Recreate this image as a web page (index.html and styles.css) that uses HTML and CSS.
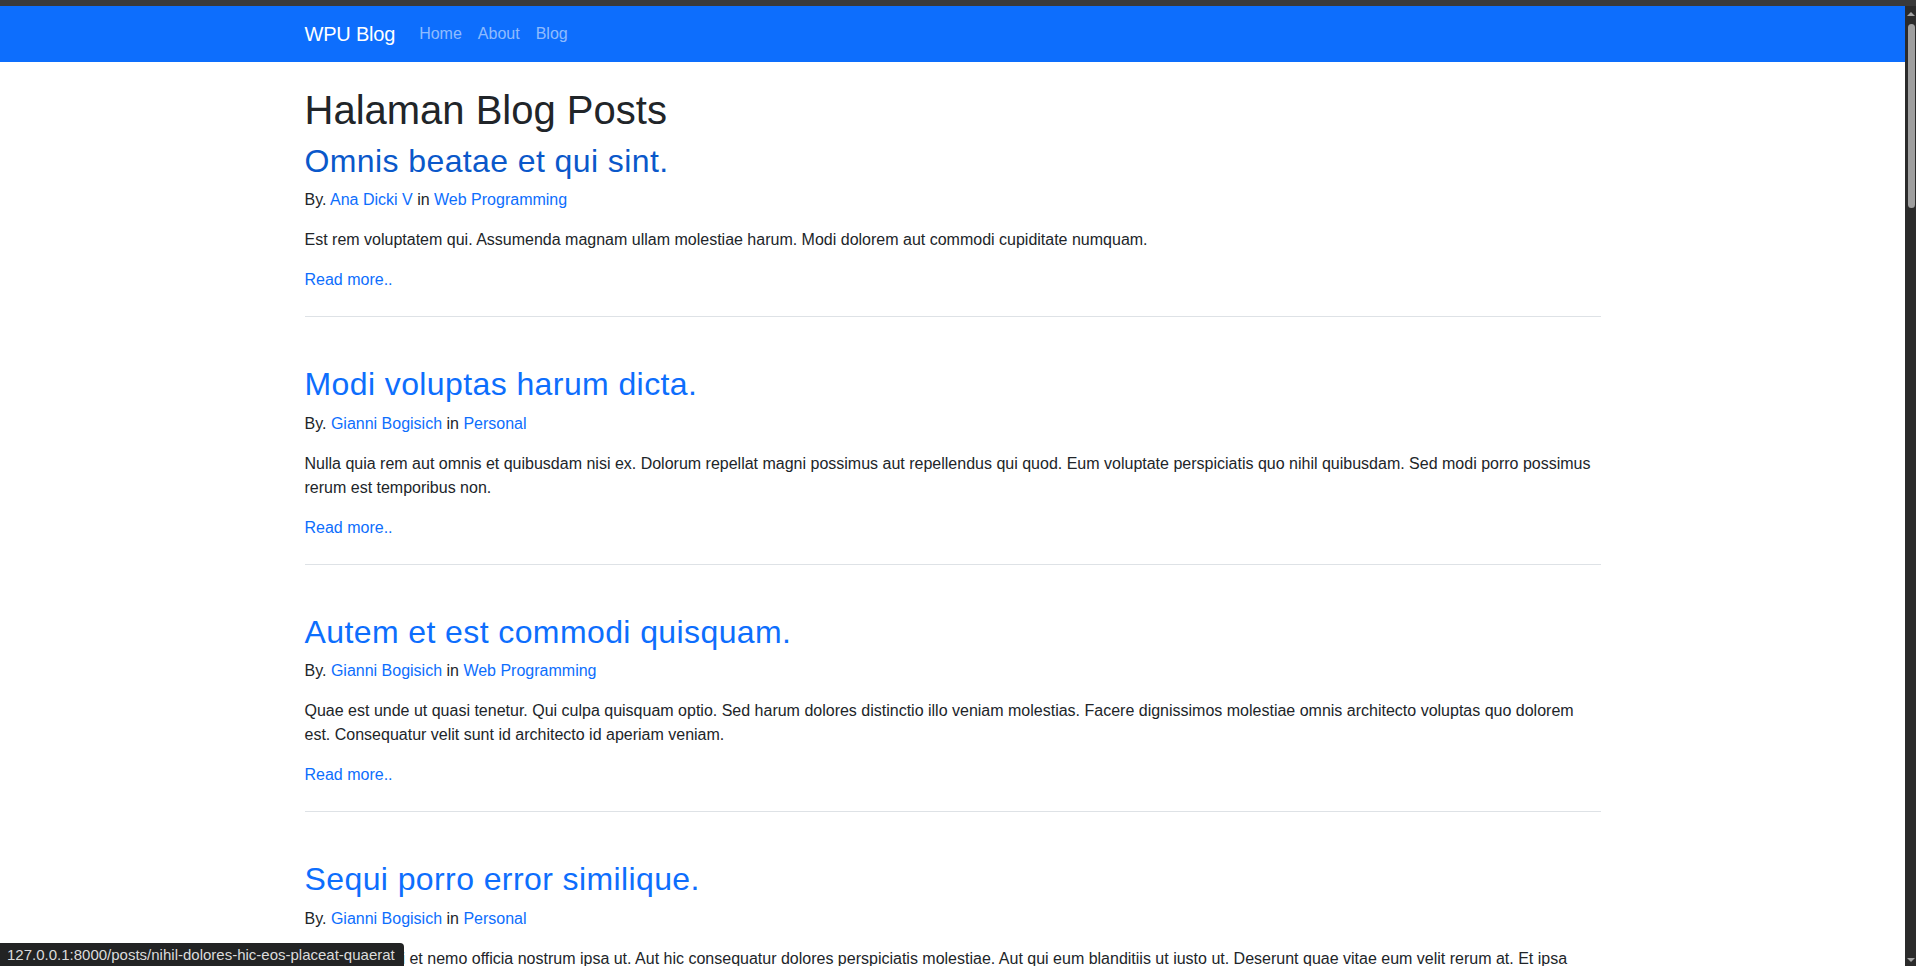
FILE: index.html
```html
<!DOCTYPE html>
<html lang="id">
<head>
<meta charset="utf-8">
<title>WPU Blog | Blog</title>
<link rel="stylesheet" href="styles.css">
</head>
<body>
<div class="topstrip"></div>
<div class="window">
  <div class="viewport">
    <nav class="navbar">
      <div class="nav-container">
        <a class="brand" href="#">WPU Blog</a>
        <ul class="nav-links">
          <li><a href="#">Home</a></li>
          <li><a href="#">About</a></li>
          <li><a href="#">Blog</a></li>
        </ul>
      </div>
    </nav>
    <main class="container">
      <h1 class="page-title">Halaman Blog Posts</h1>

      <article class="post">
        <h2><a href="#" class="hovered">Omnis beatae et qui sint.</a></h2>
        <p>By. <a href="#">Ana Dicki V</a> in <a href="#">Web Programming</a></p>
        <p>Est rem voluptatem qui. Assumenda magnam ullam molestiae harum. Modi dolorem aut commodi cupiditate numquam.</p>
        <a href="#">Read more..</a>
      </article>

      <article class="post">
        <h2><a href="#">Modi voluptas harum dicta.</a></h2>
        <p>By. <a href="#">Gianni Bogisich</a> in <a href="#">Personal</a></p>
        <p>Nulla quia rem aut omnis et quibusdam nisi ex. Dolorum repellat magni possimus aut repellendus qui quod. Eum voluptate perspiciatis quo nihil quibusdam. Sed modi porro possimus rerum est temporibus non.</p>
        <a href="#">Read more..</a>
      </article>

      <article class="post">
        <h2><a href="#">Autem et est commodi quisquam.</a></h2>
        <p>By. <a href="#">Gianni Bogisich</a> in <a href="#">Web Programming</a></p>
        <p>Quae est unde ut quasi tenetur. Qui culpa quisquam optio. Sed harum dolores distinctio illo veniam molestias. Facere dignissimos molestiae omnis architecto voluptas quo dolorem est. Consequatur velit sunt id architecto id aperiam veniam.</p>
        <a href="#">Read more..</a>
      </article>

      <article class="post">
        <h2><a href="#">Sequi porro error similique.</a></h2>
        <p>By. <a href="#">Gianni Bogisich</a> in <a href="#">Personal</a></p>
        <p>Voluptates qui et nemo officia nostrum ipsa ut. Aut hic consequatur dolores perspiciatis molestiae. Aut qui eum blanditiis ut iusto ut. Deserunt quae vitae eum velit rerum at. Et ipsa quia ut aut voluptatem sunt ratione dolor.</p>
        <a href="#">Read more..</a>
      </article>
    </main>
    <div class="statusbar">127.0.0.1:8000/posts/nihil-dolores-hic-eos-placeat-quaerat</div>
  </div>
  <div class="scrollbar">
    <div class="arrow-up"></div>
    <div class="thumb"></div>
    <div class="track-rest"></div>
    <div class="arrow-down"></div>
  </div>
</div>
</body>
</html>
```
FILE: styles.css
```css
* {
  box-sizing: border-box;
}

html, body {
  margin: 0;
  padding: 0;
  height: 966px;
  overflow: hidden;
  background: #3a3a3a;
}

body {
  font-family: "Liberation Sans", Arial, sans-serif;
  font-size: 16px;
  line-height: 1.5;
  color: #212529;
}

.topstrip {
  height: 6px;
  background: #3a3a3a;
}

.window {
  display: flex;
  height: 960px;
}

.viewport {
  flex: 1;
  background: #fff;
  overflow: hidden;
  position: relative;
}

/* Navbar */
.navbar {
  background: #0d6efd;
  padding: 8px 0;
}

.nav-container {
  max-width: 1320px;
  margin: 0 auto;
  padding: 0 12px;
  display: flex;
  align-items: center;
}

.brand {
  font-size: 20px;
  line-height: 30px;
  padding: 5px 0;
  margin-right: 16px;
  color: #fff;
  text-decoration: none;
  letter-spacing: -0.2px;
}

.nav-links {
  display: flex;
  list-style: none;
  margin: 0;
  padding: 0;
}

.nav-links a {
  display: block;
  padding: 8px;
  line-height: 24px;
  color: rgba(255, 255, 255, 0.55);
  text-decoration: none;
}

/* Content */
.container {
  max-width: 1320px;
  margin: 24px auto 0;
  padding: 0 12px;
}

.page-title {
  font-size: 40px;
  font-weight: 500;
  line-height: 1.2;
  margin: 0 0 8px;
}

.post {
  border-bottom: 1px solid #dee2e6;
  padding-bottom: 24px;
  margin-bottom: 48px;
}

.post h2 {
  font-size: 32px;
  font-weight: 500;
  line-height: 1.2;
  letter-spacing: 0.4px;
  margin: 0 0 8px;
}

.post p {
  margin: 0 0 16px;
}

.post a {
  color: #0d6efd;
  text-decoration: none;
}

.post a.hovered {
  color: #0a58ca;
}

/* Browser status bubble */
.statusbar {
  position: absolute;
  left: 0;
  bottom: 0;
  height: 23px;
  padding: 0 9px 0 7px;
  background: #222324;
  color: #dcdcdc;
  font-size: 15px;
  line-height: 23px;
  border-top-right-radius: 4px;
  white-space: nowrap;
}

/* Fake scrollbar */
.scrollbar {
  width: 11px;
  background: #2b2b2b;
  display: flex;
  flex-direction: column;
  align-items: center;
  padding: 6px 0 4px;
}

.arrow-up {
  width: 0;
  height: 0;
  border-left: 4px solid transparent;
  border-right: 4px solid transparent;
  border-bottom: 4px solid #a3a3a3;
  margin-bottom: 8px;
}

.thumb {
  width: 7px;
  height: 184px;
  margin-left: 2px;
  background: #9f9f9f;
  border-radius: 4px;
}

.track-rest {
  flex: 1;
}

.arrow-down {
  width: 0;
  height: 0;
  border-left: 4px solid transparent;
  border-right: 4px solid transparent;
  border-top: 4px solid #a3a3a3;
}
```
